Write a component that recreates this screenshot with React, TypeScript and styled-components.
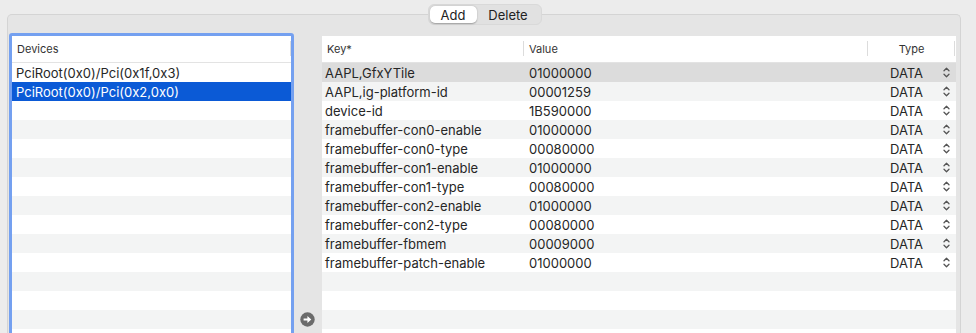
import React from 'react';
import styled, { createGlobalStyle } from 'styled-components';

const GlobalStyle = createGlobalStyle`
  html, body {
    margin: 0;
    padding: 0;
    height: 100%;
    overflow: hidden;
    background: #ececec;
    font-family: Inter, "Liberation Sans", sans-serif;
    color: #262626;
  }
`;

const Page = styled.div`
  height: 100vh;
  display: flex;
  flex-direction: column;
  box-sizing: border-box;
  padding: 4px 15px 0 7px;
`;

const TabsRow = styled.div`
  display: flex;
  justify-content: center;
  position: relative;
  z-index: 1;
  padding-left: 1px;
`;

const Segmented = styled.div`
  display: flex;
  height: 21px;
  box-sizing: border-box;
  padding: 1px;
  border-radius: 6px;
  background: #e1e1e1;
  border: 1px solid #d9d9d9;
`;

const Segment = styled.div<{ $active?: boolean }>`
  display: flex;
  align-items: center;
  justify-content: center;
  width: ${(p) => (p.$active ? '47px' : '63px')};
  font-size: 13px;
  color: #222;
  border-radius: 5px;
  background: ${(p) => (p.$active ? '#ffffff' : 'transparent')};
  box-shadow: ${(p) => (p.$active ? '0 0.5px 1.5px rgba(0,0,0,0.3)' : 'none')};
`;

const GroupBox = styled.div`
  margin-top: -11px;
  flex: 1;
  min-height: 0;
  overflow: hidden;
  box-sizing: border-box;
  border: 1px solid #d4d4d4;
  border-bottom: none;
  border-radius: 5px 5px 0 0;
  background: #e5e5e5;
  padding: 21px 4px 0 4px;
  display: flex;
  align-items: flex-start;
`;

const DevicePanel = styled.div`
  width: 279px;
  background: #fff;
  box-shadow: 0 0 0 3px #74a0f0;
  border-radius: 1px;
`;

const Middle = styled.div`
  width: 31px;
  display: flex;
  justify-content: center;
  padding-top: 276px;
  padding-left: 2px;
  box-sizing: border-box;
`;

const PropTable = styled.div`
  width: 634px;
  background: #fff;
`;

const HeaderRow = styled.div`
  display: flex;
  height: 27px;
  box-sizing: border-box;
  border-bottom: 1px solid #e3e3e3;
  background: #fff;
`;

const HeaderCell = styled.div<{ $w?: number; $center?: boolean; $divider?: boolean }>`
  ${(p) => (p.$w ? `width: ${p.$w}px;` : 'flex: 1;')}
  flex-shrink: 0;
  display: flex;
  align-items: center;
  justify-content: ${(p) => (p.$center ? 'center' : 'flex-start')};
  box-sizing: border-box;
  padding-left: ${(p) => (p.$center ? '0' : '5px')};
  font-size: 11px;
  color: #333;
  position: relative;
  ${(p) =>
    p.$divider
      ? `&::after {
    content: '';
    position: absolute;
    right: 0;
    top: 5px;
    bottom: 6px;
    width: 1px;
    background: #dcdcdc;
  }`
      : ''}
`;

const Row = styled.div<{ $stripe?: boolean; $sel?: 'blue' | 'gray' }>`
  display: flex;
  align-items: center;
  height: 19px;
  font-size: 13px;
  white-space: nowrap;
  background: ${(p) =>
    p.$sel === 'blue' ? '#0b5ad6' : p.$sel === 'gray' ? '#dcdcdc' : p.$stripe ? '#f3f4f4' : '#fff'};
  color: ${(p) => (p.$sel === 'blue' ? '#fff' : '#262626')};
`;

const Cell = styled.div<{ $w: number; $pad?: number }>`
  width: ${(p) => p.$w}px;
  flex-shrink: 0;
  box-sizing: border-box;
  padding-left: ${(p) => p.$pad ?? 3}px;
  overflow: hidden;
`;

const TypeCell = styled.div`
  width: 87px;
  flex-shrink: 0;
  display: flex;
  align-items: center;
  justify-content: flex-end;
  gap: 20px;
  padding-right: 5px;
  box-sizing: border-box;
`;

const DeviceText = styled.span`
  padding-left: 4px;
`;

function Stepper() {
  return (
    <svg width="7" height="11" viewBox="0 0 7 11" fill="none" stroke="#555" strokeWidth="1.3" strokeLinecap="round" strokeLinejoin="round">
      <path d="M1 3.8 L3.5 1.3 L6 3.8" />
      <path d="M1 7.2 L3.5 9.7 L6 7.2" />
    </svg>
  );
}

function ArrowButton() {
  return (
    <svg width="15" height="15" viewBox="0 0 15 15">
      <circle cx="7.5" cy="7.5" r="7.2" fill="#6b6b6b" />
      <path d="M3.6 6.4 H7.4 V3.9 L11.3 7.5 L7.4 11.1 V8.6 H3.6 Z" fill="#fff" />
    </svg>
  );
}

const devices = ['PciRoot(0x0)/Pci(0x1f,0x3)', 'PciRoot(0x0)/Pci(0x2,0x0)'];

const props: [string, string][] = [
  ['AAPL,GfxYTile', '01000000'],
  ['AAPL,ig-platform-id', '00001259'],
  ['device-id', '1B590000'],
  ['framebuffer-con0-enable', '01000000'],
  ['framebuffer-con0-type', '00080000'],
  ['framebuffer-con1-enable', '01000000'],
  ['framebuffer-con1-type', '00080000'],
  ['framebuffer-con2-enable', '01000000'],
  ['framebuffer-con2-type', '00080000'],
  ['framebuffer-fbmem', '00009000'],
  ['framebuffer-patch-enable', '01000000'],
];

const ROWS = 15;

export default function App() {
  return (
    <>
      <GlobalStyle />
      <Page>
        <TabsRow>
          <Segmented>
            <Segment $active>Add</Segment>
            <Segment>Delete</Segment>
          </Segmented>
        </TabsRow>
        <GroupBox>
          <DevicePanel>
            <HeaderRow>
              <HeaderCell $divider>Devices</HeaderCell>
            </HeaderRow>
            {Array.from({ length: ROWS }).map((_, i) => (
              <Row key={i} $stripe={i % 2 === 1} $sel={i === 1 ? 'blue' : undefined}>
                {devices[i] && <DeviceText>{devices[i]}</DeviceText>}
              </Row>
            ))}
          </DevicePanel>
          <Middle>
            <ArrowButton />
          </Middle>
          <PropTable>
            <HeaderRow>
              <HeaderCell $w={202} $divider>
                Key*
              </HeaderCell>
              <HeaderCell $w={344} $divider>
                Value
              </HeaderCell>
              <HeaderCell $w={87} $center $divider>
                Type
              </HeaderCell>
            </HeaderRow>
            {Array.from({ length: ROWS }).map((_, i) => {
              const p = props[i];
              return (
                <Row key={i} $stripe={i % 2 === 1} $sel={i === 0 ? 'gray' : undefined}>
                  {p && (
                    <>
                      <Cell $w={202}>{p[0]}</Cell>
                      <Cell $w={344} $pad={5}>
                        {p[1]}
                      </Cell>
                      <TypeCell>
                        <span>DATA</span>
                        <Stepper />
                      </TypeCell>
                    </>
                  )}
                </Row>
              );
            })}
          </PropTable>
        </GroupBox>
      </Page>
    </>
  );
}
